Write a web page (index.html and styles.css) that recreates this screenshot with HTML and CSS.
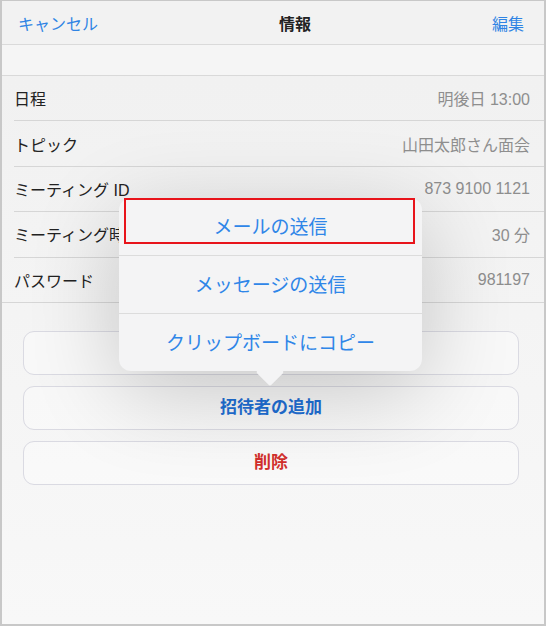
FILE: index.html
```html
<!DOCTYPE html>
<html>
<head>
  <meta charset="utf-8">
  <title>情報</title>
  <link rel="stylesheet" href="styles.css">
</head>
<body>
  <div class="frame">
    <!-- ナビゲーションバー -->
    <div class="navbar">
      <a class="nav-btn">キャンセル</a>
      <span class="nav-title">情報</span>
      <a class="nav-btn">編集</a>
    </div>
    <div class="spacer"></div>

    <!-- ミーティング情報 -->
    <div class="rows">
      <div class="row"><span class="label">日程</span><span class="value">明後日 13:00</span></div>
      <div class="row"><span class="label">トピック</span><span class="value">山田太郎さん面会</span></div>
      <div class="row"><span class="label">ミーティング ID</span><span class="value">873 9100 1121</span></div>
      <div class="row"><span class="label">ミーティング時間</span><span class="value">30 分</span></div>
      <div class="row"><span class="label">パスワード</span><span class="value">981197</span></div>
    </div>

    <div class="actions">
      <div class="action"></div>
      <div class="action primary">招待者の追加</div>
      <div class="action danger">削除</div>
    </div>

    <!-- 共有メニュー -->
    <div class="popover">
      <div class="pop-item">メールの送信</div>
      <div class="pop-item">メッセージの送信</div>
      <div class="pop-item">クリップボードにコピー</div>
    </div>
    <div class="highlight"></div>
  </div>
</body>
</html>
```

FILE: styles.css
```css
body {
  margin: 0;
  padding: 0;
  font-family: "Liberation Sans", "Noto Sans CJK JP", sans-serif;
  background-color: #fff;
}
.frame {
  position: relative;
  box-sizing: border-box;
  width: 546px;
  height: 626px;
  border: 2px solid #c8c8c8;
  border-top-width: 1px;
  background: linear-gradient(#f0f0f0, #f8f8f8);
  overflow: hidden;
}
.navbar {
  display: flex;
  align-items: center;
  justify-content: space-between;
  height: 43px;
  padding: 0 20px 0 16px;
  background-color: #f2f2f2;
  border-bottom: 1px solid #dadada;
}
.nav-btn {
  color: #2f84e4;
  font-size: 16px;
  cursor: pointer;
}
.nav-title {
  font-size: 16px;
  font-weight: bold;
  color: #222;
}
.spacer {
  height: 30px;
  background-color: #f5f5f5;
  border-bottom: 1px solid #d9d9d9;
}
.row {
  display: flex;
  align-items: center;
  justify-content: space-between;
  height: 44.4px;
  margin-left: 12px;
  padding-right: 14px;
  border-bottom: 1px solid #d6d6d6;
  font-size: 16px;
  overflow: hidden;
  white-space: nowrap;
}
.row:last-child {
  margin-left: 0;
  padding-left: 12px;
}
.label {
  color: #222;
}
.value {
  color: #8e8e8e;
}
.actions {
  display: flex;
  flex-direction: column;
  gap: 11px;
  padding: 28px 25px 0 21px;
}
.action {
  height: 42px;
  line-height: 42px;
  text-align: center;
  border: 1px solid #dadae2;
  border-radius: 11px;
  background-color: rgba(255, 255, 255, 0.35);
  font-size: 17px;
  font-weight: bold;
}
.action.primary {
  color: #1f6fd4;
}
.action.danger {
  color: #d2302c;
}
.popover {
  position: absolute;
  left: 117px;
  top: 197px;
  width: 303px;
  background-color: #f4f4f5;
  border-radius: 12px;
  box-shadow: 0 20px 90px rgba(0, 0, 0, 0.2);
}
.popover::after {
  content: "";
  position: absolute;
  left: 141px;
  bottom: -11px;
  width: 20px;
  height: 20px;
  background-color: #f4f4f5;
  transform: rotate(45deg);
  border-radius: 2px;
}
.pop-item {
  position: relative;
  z-index: 1;
  height: 57px;
  line-height: 59px;
  text-align: center;
  font-size: 19px;
  color: #2f86e8;
  border-bottom: 1px solid #dcdcdc;
}
.pop-item:last-child {
  border-bottom: none;
}
.highlight {
  position: absolute;
  left: 122px;
  top: 197px;
  width: 287px;
  height: 42px;
  border: 2px solid #e8141b;
  z-index: 2;
}
```
